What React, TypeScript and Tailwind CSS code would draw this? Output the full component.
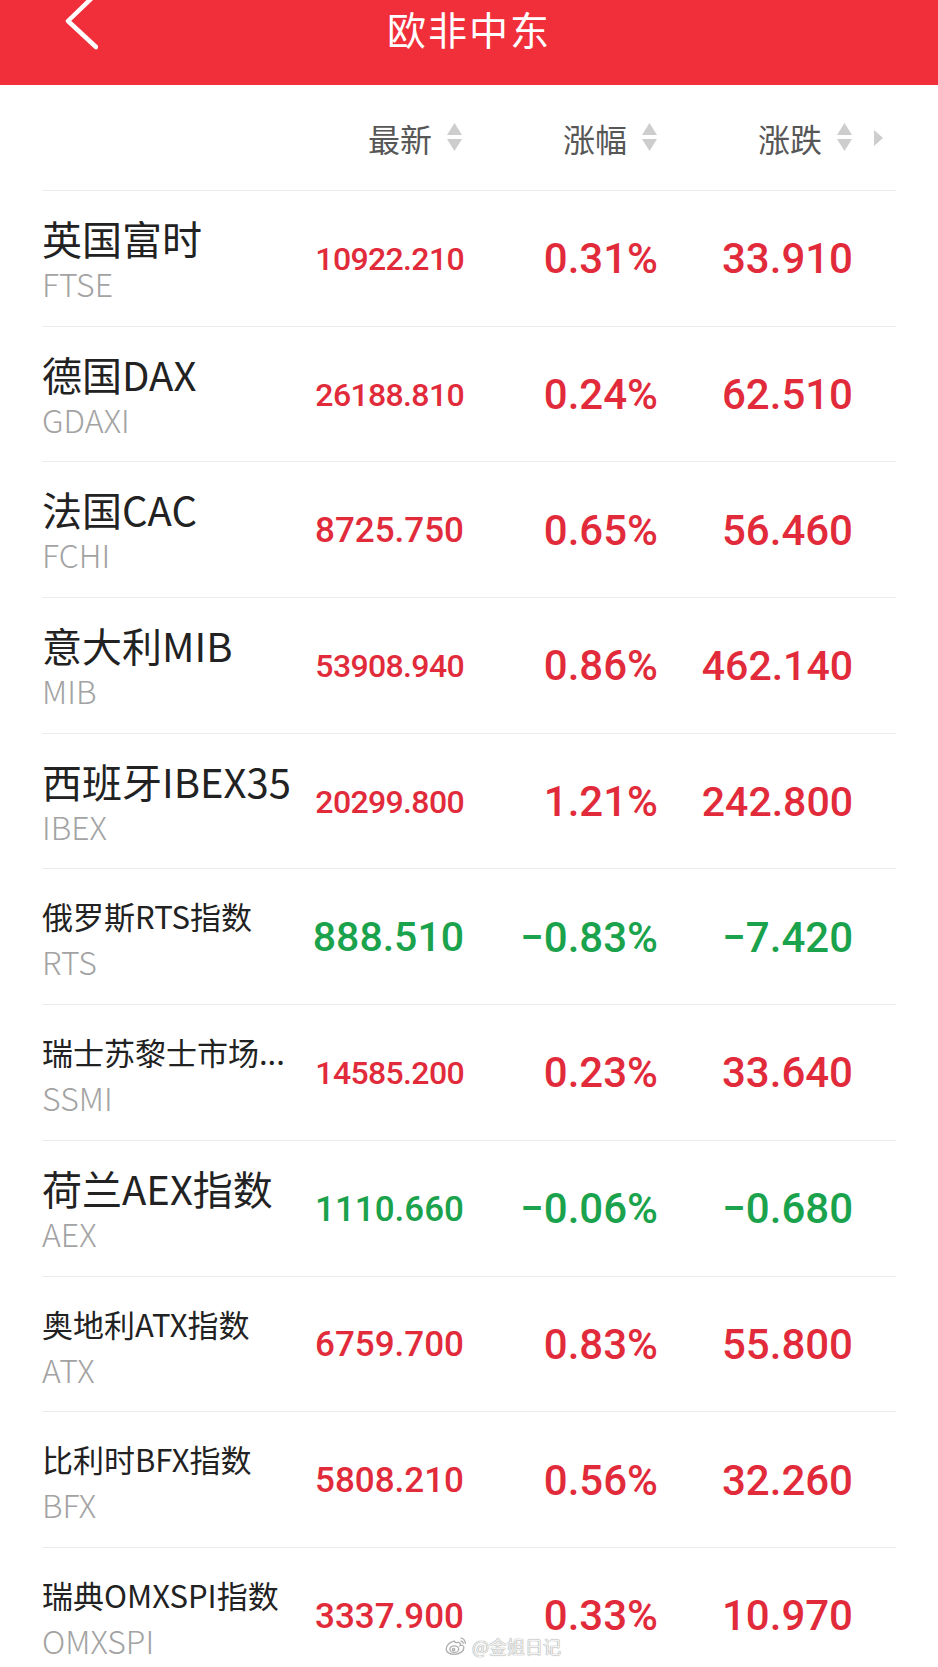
import React from 'react';

interface Quote {
  name: string;
  code: string;
  big: boolean;
  last: string;
  pct: string;
  chg: string;
  up: boolean;
}

const quotes: Quote[] = [
  { name: '英国富时', code: 'FTSE', big: true, last: '10922.210', pct: '0.31%', chg: '33.910', up: true },
  { name: '德国DAX', code: 'GDAXI', big: true, last: '26188.810', pct: '0.24%', chg: '62.510', up: true },
  { name: '法国CAC', code: 'FCHI', big: true, last: '8725.750', pct: '0.65%', chg: '56.460', up: true },
  { name: '意大利MIB', code: 'MIB', big: true, last: '53908.940', pct: '0.86%', chg: '462.140', up: true },
  { name: '西班牙IBEX35', code: 'IBEX', big: true, last: '20299.800', pct: '1.21%', chg: '242.800', up: true },
  { name: '俄罗斯RTS指数', code: 'RTS', big: false, last: '888.510', pct: '−0.83%', chg: '−7.420', up: false },
  { name: '瑞士苏黎士市场...', code: 'SSMI', big: false, last: '14585.200', pct: '0.23%', chg: '33.640', up: true },
  { name: '荷兰AEX指数', code: 'AEX', big: true, last: '1110.660', pct: '−0.06%', chg: '−0.680', up: false },
  { name: '奥地利ATX指数', code: 'ATX', big: false, last: '6759.700', pct: '0.83%', chg: '55.800', up: true },
  { name: '比利时BFX指数', code: 'BFX', big: false, last: '5808.210', pct: '0.56%', chg: '32.260', up: true },
  { name: '瑞典OMXSPI指数', code: 'OMXSPI', big: false, last: '3337.900', pct: '0.33%', chg: '10.970', up: true },
];

// numbers shrink to fit the column, like the app does
const fitSize: Record<number, string> = {
  9: 'text-[32px] tracking-[-0.02em]',
  8: 'text-[35px]',
  7: 'text-[41px]',
  6: 'text-[42px]',
  5: 'text-[42px]',
};

const cjk = "font-['Noto_Sans_CJK_SC','Noto_Sans',sans-serif]";
const num = "font-['Roboto','Liberation_Sans',sans-serif] font-medium leading-none";

function SortArrows() {
  return (
    <svg width="17" height="31" viewBox="0 0 17 31" className="ml-[14px]">
      <path d="M8.5 1 L16 13 L1 13 Z" fill="#cdcdcd" />
      <path d="M1 17 L16 17 L8.5 29 Z" fill="#cdcdcd" />
    </svg>
  );
}

function WeiboLogo() {
  return (
    <svg width="25" height="21" viewBox="0 0 34 28" fill="none" stroke="#b0b0b0" strokeWidth="1.9">
      <path d="M14 8c-6 1-11 6-11 11 0 4 5 7 11 7 7 0 13-4 13-9 0-3-3-4-5-3 1-3-1-5-4-4-2 0-3 1-4-2z" fill="rgba(255,255,255,0.7)" />
      <ellipse cx="14" cy="19" rx="6" ry="4.5" />
      <circle cx="13" cy="19.5" r="1.6" />
      <path d="M23 4c3 0 6 3 6 7" strokeLinecap="round" />
      <path d="M23 8c1.5 0 3 1.5 3 3" strokeLinecap="round" />
    </svg>
  );
}

export default function App() {
  return (
    <div className="relative w-[938px] h-[1667px] overflow-hidden bg-white">
      {/* Header */}
      <div className="relative h-[85px] bg-[#f02f3b] flex justify-center">
        <svg width="40" height="60" viewBox="0 0 40 60" className="absolute left-[58px] top-[-9px]">
          <path d="M38 3 L10 30 L38 56" stroke="white" strokeWidth="4.5" fill="none" strokeLinecap="round" strokeLinejoin="round" />
        </svg>
        <div className={`${cjk} text-white text-[39px] leading-[56px] tracking-[2px]`}>欧非中东</div>
      </div>

      <div className="px-[42px]">
        {/* Column headers */}
        <div className={`${cjk} h-[105px] flex items-center text-[32px] text-[#575757]`}>
          <div className="w-[272px]" />
          <div className="w-[150px] flex items-center justify-end pr-[1px]">
            <span className="leading-none">最新</span>
            <SortArrows />
          </div>
          <div className="w-[194px] flex items-center justify-end">
            <span className="leading-none">涨幅</span>
            <SortArrows />
          </div>
          <div className="w-[195px] flex items-center justify-end">
            <span className="leading-none">涨跌</span>
            <SortArrows />
          </div>
          <div className="flex-1 flex items-center pl-[20px]">
            <svg width="11" height="18" viewBox="0 0 11 18">
              <path d="M1 1 L10 9 L1 17 Z" fill="#cdcdcd" />
            </svg>
          </div>
        </div>

        {/* Rows */}
        {quotes.map((q) => {
          const color = q.up ? 'text-[#e12b3b]' : 'text-[#1ba24c]';
          return (
            <div key={q.code} className="h-[135.7px] border-t border-[#ececec] flex">
              <div className="w-[272px] pt-[24px] whitespace-nowrap">
                <div
                  className={`${cjk} leading-[46px] text-[#222222] ${q.big ? 'text-[40px]' : 'text-[31px]'}`}
                >
                  {q.name}
                </div>
                <div className={`${cjk} font-light leading-[40px] mt-[2px] text-[32px] text-[#a3a3a3]`}>{q.code}</div>
              </div>
              <div className={`w-[150px] flex items-center justify-end pt-[2px] ${num} ${color} ${fitSize[q.last.length]}`}>
                {q.last}
              </div>
              <div className={`w-[194px] flex items-center justify-end pt-[2px] ${num} ${color} text-[42px]`}>
                {q.pct}
              </div>
              <div className={`w-[195px] flex items-center justify-end pt-[2px] ${num} ${color} ${fitSize[q.chg.length]}`}>
                {q.chg}
              </div>
            </div>
          );
        })}
      </div>

      {/* watermark */}
      <div className="absolute left-[444px] top-[1635px] flex items-center gap-[3px]">
        <WeiboLogo />
        <span
          className={`${cjk} text-[18px] leading-none text-[#f2f2f2] [text-shadow:0_0_1px_#9a9a9a,0_0_1px_#9a9a9a]`}
        >
          @金姐日记
        </span>
      </div>
    </div>
  );
}
